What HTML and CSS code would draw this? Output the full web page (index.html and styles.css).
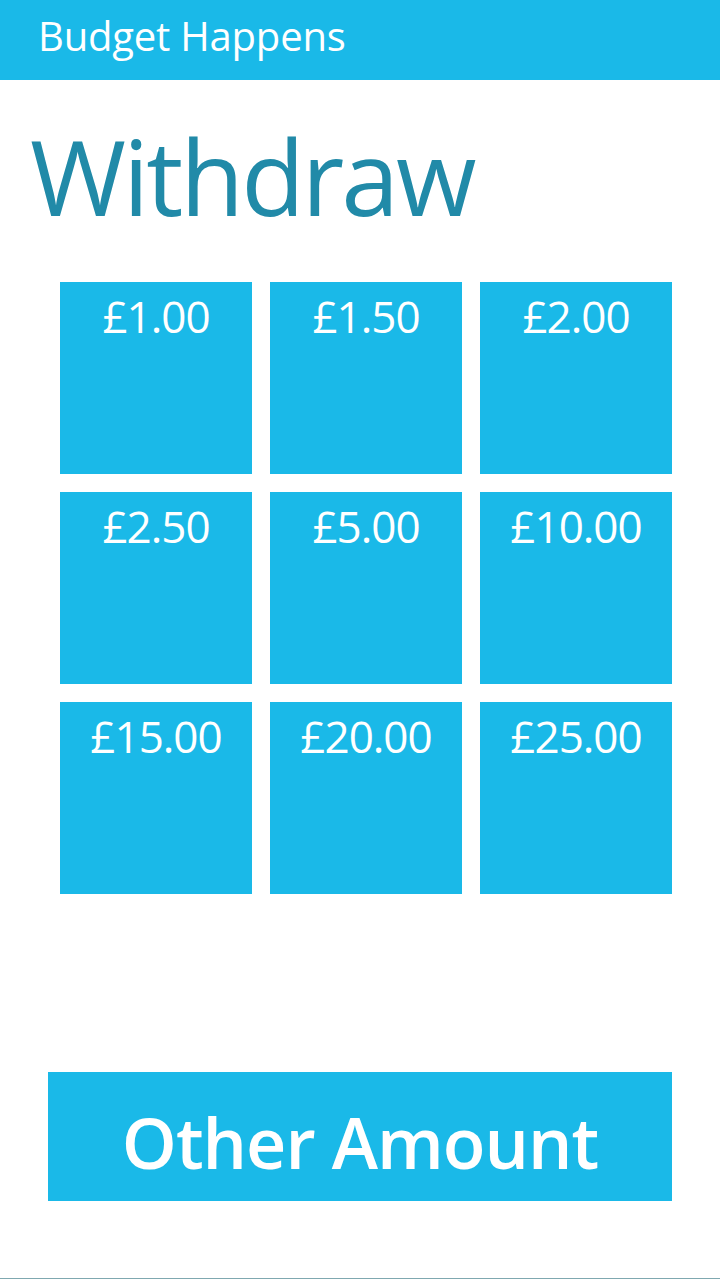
FILE: index.html
```html
<!DOCTYPE html>
<html lang="en">
<head>
<meta charset="utf-8">
<title>Budget Happens</title>
<link rel="stylesheet" href="styles.css">
</head>
<body>
<div class="app">
  <header class="topbar"><span class="app-title">Budget Happens</span></header>
  <h1 class="page-title">Withdraw</h1>
  <div class="grid">
    <button class="tile">£1.00</button>
    <button class="tile">£1.50</button>
    <button class="tile">£2.00</button>
    <button class="tile">£2.50</button>
    <button class="tile">£5.00</button>
    <button class="tile">£10.00</button>
    <button class="tile">£15.00</button>
    <button class="tile">£20.00</button>
    <button class="tile">£25.00</button>
  </div>
  <div class="spacer"></div>
  <button class="other">Other Amount</button>
  <div class="bottom-line"></div>
</div>
</body>
</html>
```
FILE: styles.css
```css
html, body {
  margin: 0;
  padding: 0;
  background: #ffffff;
}
body {
  font-family: "Open Sans", "Noto Sans", sans-serif;
}
.app {
  width: 720px;
  height: 1280px;
  display: flex;
  flex-direction: column;
}
.topbar {
  height: 80px;
  background: #1ab9e8;
  display: flex;
  align-items: flex-start;
  padding: 12px 0 0 38px;
  box-sizing: border-box;
}
.app-title {
  color: #ffffff;
  font-size: 40px;
  font-weight: 400;
  letter-spacing: -0.2px;
  line-height: 1.2;
}
.page-title {
  margin: 0;
  padding: 34px 0 0 30px;
  height: 168px;
  box-sizing: border-box;
  color: #218aa8;
  font-size: 104px;
  font-weight: 400;
  line-height: 1.2;
  letter-spacing: -3px;
}
.grid {
  display: grid;
  grid-template-columns: repeat(3, 192px);
  grid-auto-rows: 192px;
  gap: 18px;
  padding-left: 60px;
  margin-top: 34px;
}
.tile {
  border: none;
  margin: 0;
  padding: 8px 0 0;
  background: #1ab9e8;
  color: #ffffff;
  font-family: inherit;
  font-size: 44px;
  font-weight: 400;
  letter-spacing: -1px;
  line-height: 1.2;
  display: flex;
  justify-content: center;
  align-items: flex-start;
}
.spacer {
  flex: 1;
}
.other {
  border: none;
  margin: 0 48px 77px 48px;
  height: 129px;
  background: #1ab9e8;
  color: #ffffff;
  font-family: inherit;
  font-size: 70px;
  font-weight: 600;
  letter-spacing: -1px;
  padding: 10px 0 0;
  line-height: 1;
}
.bottom-line {
  height: 1px;
  background: #7fa8b0;
  margin-bottom: 1px;
}
```
